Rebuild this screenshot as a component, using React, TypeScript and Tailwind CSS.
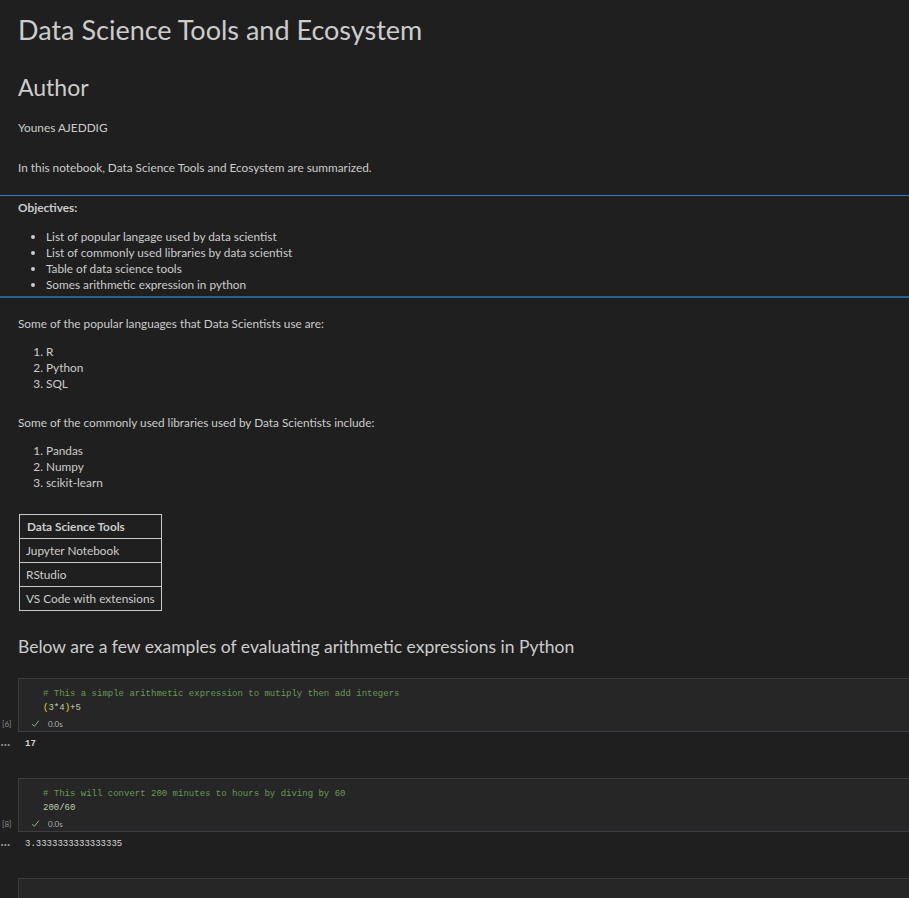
import React from "react";

const sans = { fontFamily: '"Lato", "Noto Sans", sans-serif' };
const mono = { fontFamily: '"Liberation Mono", monospace' };

function Check() {
  return (
    <svg width="9" height="9" viewBox="0 0 16 16" className="shrink-0">
      <path d="M2 9 L6 13 L14 3" fill="none" stroke="#89d185" strokeWidth="1.6" />
    </svg>
  );
}

function CodeCell({ n, lines, out, outBold }: { n: number; lines: React.ReactNode[]; out: string; outBold?: boolean }) {
  return (
    <div className="flex flex-col">
      <div className="flex">
        <div className="w-[18px] shrink-0 flex flex-col justify-end pb-[3px]">
          <span className="text-[8px] text-[#8b8b8b] leading-[10px] pl-[2px]" style={sans}>[{n}]</span>
        </div>
        <div className="flex-1 mr-[-4px] border border-[#3b3b40] bg-[#262626] flex flex-col">
          <div className="pt-[8px] pl-[24px] text-[9px] leading-[14px] whitespace-pre text-[#d4d4d4]" style={mono}>
            {lines.map((l, i) => (
              <div key={i}>{l}</div>
            ))}
          </div>
          <div className="flex items-center h-[16px] pl-[12px] gap-[8px]">
            <Check />
            <span className="text-[8px] text-[#b0b0b0] leading-[10px] mt-[2px]" style={sans}>0.0s</span>
          </div>
        </div>
      </div>
      <div className="flex items-center h-[22px] pt-[4px]">
        <span className="w-[25px] text-[#9d9d9d] text-[7px] leading-[10px] tracking-[-1px]" style={mono}>•••</span>
        <span className={`text-[9px] text-[#d4d4d4] ${outBold ? "font-bold" : ""}`} style={mono}>{out}</span>
      </div>
    </div>
  );
}

export default function App() {
  return (
    <div className="w-[909px] h-[898px] overflow-hidden bg-[#1f1f1f] text-[#cccccc]" style={sans}>
      <div className="px-[18px]">
        <h1 className="text-[27px] leading-[32px] pt-[14px] text-[#cccccc]">Data Science Tools and Ecosystem</h1>
        <h2 className="text-[23px] leading-[28px] mt-[27px]">Author</h2>
        <p className="text-[11.8px] leading-[16px] mt-[19px]">Younes AJEDDIG</p>
        <p className="text-[11.8px] leading-[16px] mt-[24px]">In this notebook, Data Science Tools and Ecosystem are summarized.</p>
      </div>
      <div className="h-px bg-[#3a7dc4] mt-[19px]" />
      <div className="px-[18px]">
        <p className="text-[11.8px] leading-[16px] mt-[4px] font-bold">Objectives:</p>
        <ul className="mt-[13px] text-[11.8px] leading-[16px] list-disc pl-[28px]">
          <li>List of popular langage used by data scientist</li>
          <li>List of commonly used libraries by data scientist</li>
          <li>Table of data science tools</li>
          <li>Somes arithmetic expression in python</li>
        </ul>
      </div>
      <div className="h-[2px] bg-[#2b5f8f] mt-[3px]" />
      <div className="px-[18px]">
        <p className="text-[11.8px] leading-[16px] mt-[18px]">Some of the popular languages that Data Scientists use are:</p>
        <ol className="mt-[12px] text-[11.8px] leading-[16px] list-decimal pl-[28px]">
          <li>R</li>
          <li>Python</li>
          <li>SQL</li>
        </ol>
        <p className="text-[11.8px] leading-[16px] mt-[23px]">Some of the commonly used libraries used by Data Scientists include:</p>
        <ol className="mt-[12px] text-[11.8px] leading-[16px] list-decimal pl-[28px]">
          <li>Pandas</li>
          <li>Numpy</li>
          <li>scikit-learn</li>
        </ol>
        <table className="mt-[23px] ml-px border-collapse text-[11.8px]">
          <thead>
            <tr>
              <th className="border border-[#c8c8c8] h-[24px] px-[7px] text-left font-bold">Data Science Tools</th>
            </tr>
          </thead>
          <tbody>
            {["Jupyter Notebook", "RStudio", "VS Code with extensions"].map((t) => (
              <tr key={t}>
                <td className="border border-[#c8c8c8] h-[24px] px-[6px] whitespace-nowrap">{t}</td>
              </tr>
            ))}
          </tbody>
        </table>
        <h3 className="text-[17.5px] leading-[24px] mt-[24px]">Below are a few examples of evaluating arithmetic expressions in Python</h3>
      </div>
      <div className="mt-[19px] flex flex-col">
        <CodeCell
          n={6}
          outBold
          lines={[
            <span className="text-[#6a9955]"># This a simple arithmetic expression to mutiply then add integers</span>,
            <span>
              <span className="text-[#ffd700]">(</span>
              <span className="text-[#b5cea8]">3</span>
              <span className="text-[#d4d4d4]">*</span>
              <span className="text-[#b5cea8]">4</span>
              <span className="text-[#ffd700]">)</span>
              <span className="text-[#d4d4d4]">+</span>
              <span className="text-[#b5cea8]">5</span>
            </span>,
          ]}
          out="17"
        />
        <div className="mt-[24px]">
          <CodeCell
            n={8}
            lines={[
              <span className="text-[#6a9955]"># This will convert 200 minutes to hours by diving by 60</span>,
              <span>
                <span className="text-[#b5cea8]">200</span>
                <span className="text-[#d4d4d4]">/</span>
                <span className="text-[#b5cea8]">60</span>
              </span>,
            ]}
            out="3.3333333333333335"
          />
        </div>
        <div className="mt-[24px] flex">
          <div className="w-[18px] shrink-0" />
          <div className="flex-1 mr-[-4px] border border-[#3b3b40] bg-[#262626] h-[60px]" />
        </div>
      </div>
    </div>
  );
}
